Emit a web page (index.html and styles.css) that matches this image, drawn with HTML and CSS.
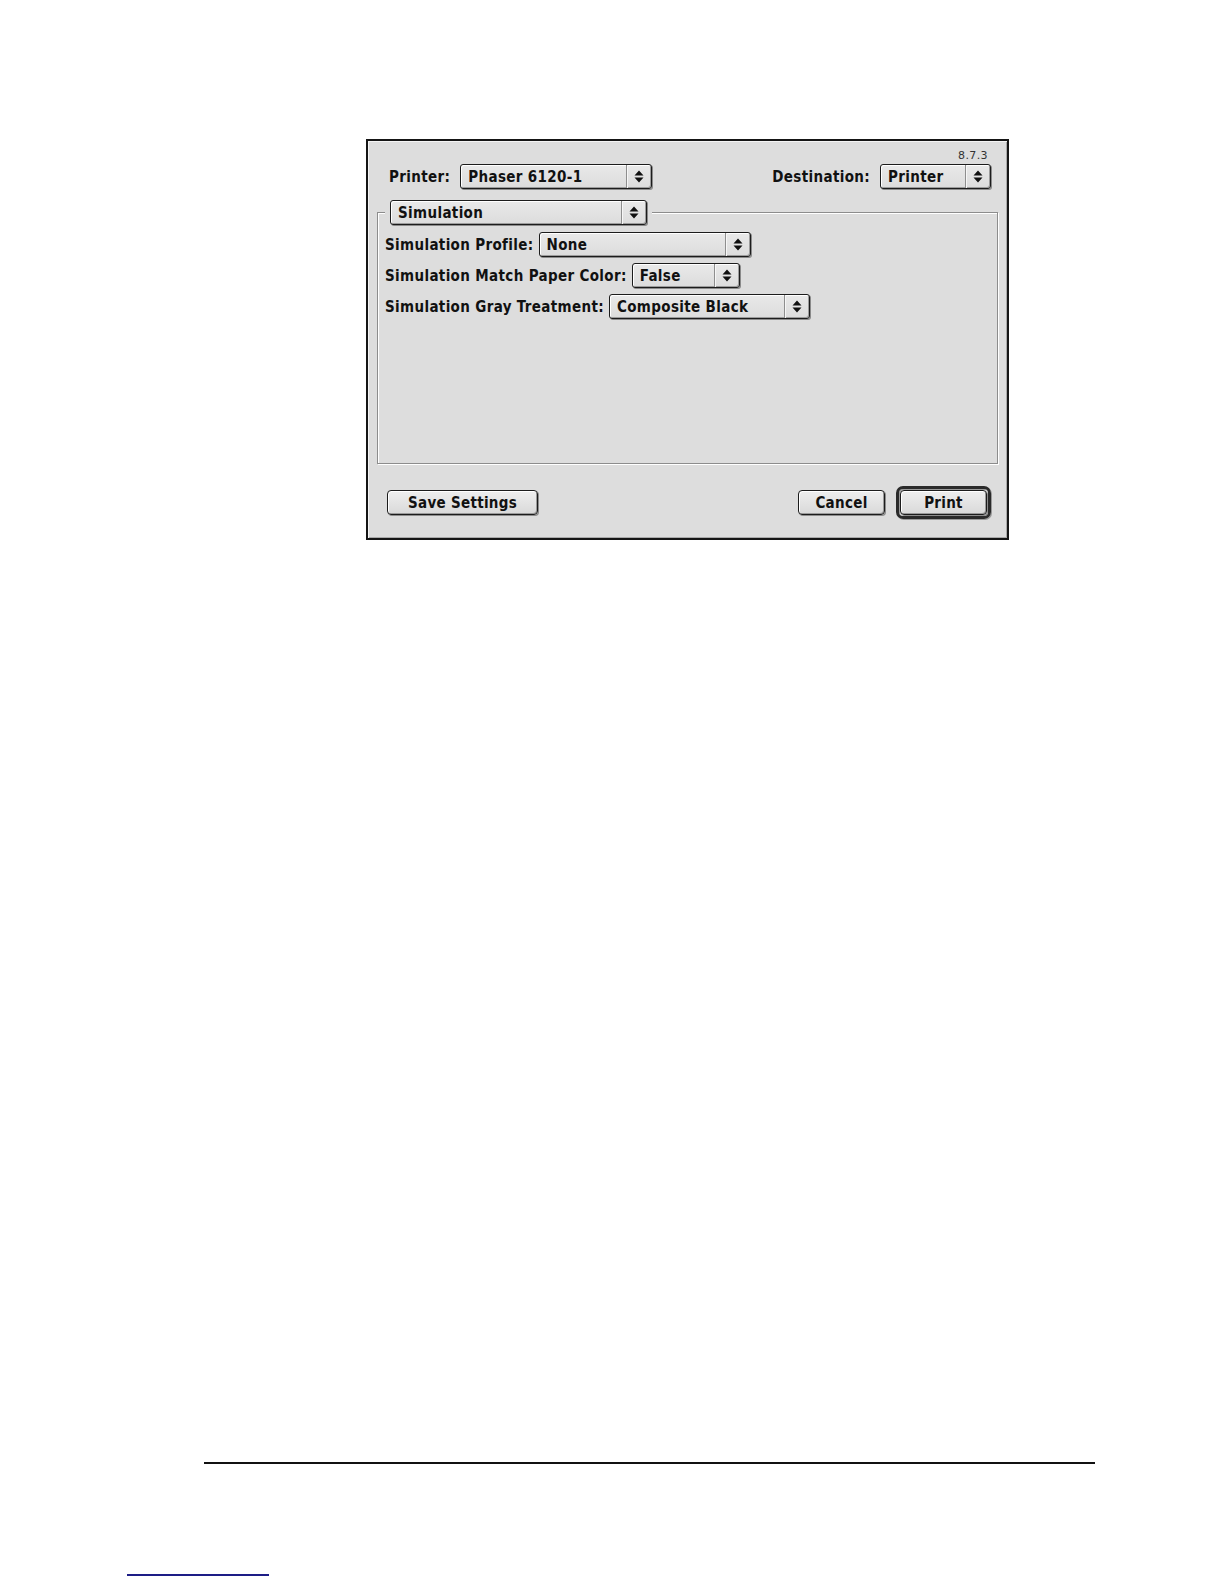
FILE: index.html
```html
<!DOCTYPE html>
<html lang="en">
<head>
<meta charset="utf-8">
<title>Print – Simulation</title>
<link rel="stylesheet" href="styles.css">
</head>
<body>
<div class="page">
  <div class="dialog">
    <div class="version">8.7.3</div>
    <div class="toprow">
      <div class="field">
        <span class="label">Printer:</span>
        <div class="popup w-printer">
          <span class="val">Phaser 6120-1</span>
          <span class="arrows"><svg width="10" height="13" viewBox="0 0 10 13"><path d="M5 0.5 L9.5 5.5 L0.5 5.5 Z M0.5 7.5 L9.5 7.5 L5 12.5 Z" fill="#111"/></svg></span>
        </div>
      </div>
      <div class="field">
        <span class="label">Destination:</span>
        <div class="popup w-dest">
          <span class="val">Printer</span>
          <span class="arrows"><svg width="10" height="13" viewBox="0 0 10 13"><path d="M5 0.5 L9.5 5.5 L0.5 5.5 Z M0.5 7.5 L9.5 7.5 L5 12.5 Z" fill="#111"/></svg></span>
        </div>
      </div>
    </div>

    <div class="group">
      <div class="group-title">
        <div class="popup w-sim">
          <span class="val">Simulation</span>
          <span class="arrows"><svg width="10" height="13" viewBox="0 0 10 13"><path d="M5 0.5 L9.5 5.5 L0.5 5.5 Z M0.5 7.5 L9.5 7.5 L5 12.5 Z" fill="#111"/></svg></span>
        </div>
      </div>
      <div class="rows">
        <div class="row">
          <span class="label">Simulation Profile:</span>
          <div class="popup w-profile">
            <span class="val">None</span>
            <span class="arrows"><svg width="10" height="13" viewBox="0 0 10 13"><path d="M5 0.5 L9.5 5.5 L0.5 5.5 Z M0.5 7.5 L9.5 7.5 L5 12.5 Z" fill="#111"/></svg></span>
          </div>
        </div>
        <div class="row">
          <span class="label">Simulation Match Paper Color:</span>
          <div class="popup w-match">
            <span class="val">False</span>
            <span class="arrows"><svg width="10" height="13" viewBox="0 0 10 13"><path d="M5 0.5 L9.5 5.5 L0.5 5.5 Z M0.5 7.5 L9.5 7.5 L5 12.5 Z" fill="#111"/></svg></span>
          </div>
        </div>
        <div class="row">
          <span class="label">Simulation Gray Treatment:</span>
          <div class="popup w-gray">
            <span class="val">Composite Black</span>
            <span class="arrows"><svg width="10" height="13" viewBox="0 0 10 13"><path d="M5 0.5 L9.5 5.5 L0.5 5.5 Z M0.5 7.5 L9.5 7.5 L5 12.5 Z" fill="#111"/></svg></span>
          </div>
        </div>
      </div>
    </div>

    <div class="buttons">
      <button class="btn w-save" type="button">Save Settings</button>
      <div class="btn-right">
        <button class="btn w-cancel" type="button">Cancel</button>
        <span class="default-ring"><button class="btn w-print" type="button">Print</button></span>
      </div>
    </div>
  </div>

  <div class="rule"></div>
  <div class="link-line"></div>
</div>
</body>
</html>
```

FILE: styles.css
```css
html, body {
  margin: 0;
  padding: 0;
  background: #ffffff;
}

.page {
  padding-top: 139px;
  font-family: "DejaVu Sans Condensed", "DejaVu Sans", "Liberation Sans", sans-serif;
  font-stretch: condensed;
  color: #111;
}

.dialog {
  box-sizing: border-box;
  width: 643px;
  height: 401px;
  margin-left: 366px;
  background: #dddddd;
  border: 2px solid #151515;
  box-shadow: inset 1px 1px 0 #f4f4f4, inset -1px -1px 0 #a9a9a9;
}

.version {
  box-sizing: border-box;
  height: 23px;
  padding: 9px 19px 0 0;
  text-align: right;
  font-family: "DejaVu Sans", sans-serif;
  font-stretch: normal;
  font-size: 11px;
  line-height: 12px;
  color: #333;
  letter-spacing: 0.4px;
}

.toprow {
  display: flex;
  justify-content: space-between;
  align-items: center;
  height: 25px;
  padding: 0 16px 0 21px;
}

.field {
  display: flex;
  align-items: center;
  gap: 10px;
}

.label {
  font-weight: bold;
  font-size: 15px;
  letter-spacing: 0.35px;
  white-space: nowrap;
}

/* Popup menu */
.popup {
  box-sizing: border-box;
  display: flex;
  align-items: stretch;
  height: 25px;
  border: 1px solid #1c1c1c;
  border-radius: 3px;
  background: linear-gradient(#e9e9e9, #dcdcdc);
  box-shadow: inset 1px 1px 0 #ffffff, inset -1px -1px 0 #9c9c9c, 1px 1px 0 #8a8a8a;
}

.popup .val {
  flex: 1;
  padding-left: 7px;
  font-weight: bold;
  font-size: 15px;
  letter-spacing: 0.35px;
  line-height: 24px;
  white-space: nowrap;
}

.popup .arrows {
  display: flex;
  align-items: center;
  justify-content: center;
  width: 24px;
  border-left: 1px solid #8e8e8e;
  box-shadow: inset 1px 0 0 #f6f6f6;
}

.w-printer { width: 192px; }
.w-dest { width: 111px; }
.w-sim { width: 257px; }
.w-profile { width: 212px; }
.w-match { width: 108px; }
.w-gray { width: 201px; }

/* Group box */
.group {
  box-sizing: border-box;
  width: 621px;
  height: 252px;
  margin: 23px 0 0 9px;
  padding: 0 7px;
  border: 1px solid #8c8c8c;
  box-shadow: inset 1px 1px 0 #ffffff, 1px 1px 0 #ffffff;
}

.group-title {
  display: flex;
  width: max-content;
  margin: -13px 0 0 0;
  padding: 0 5px;
  background: #dddddd;
}

.rows {
  display: flex;
  flex-direction: column;
  gap: 6px;
  padding-top: 7px;
}

.row {
  display: flex;
  align-items: center;
  gap: 5px;
}

/* Buttons */
.buttons {
  display: flex;
  justify-content: space-between;
  align-items: center;
  height: 33px;
  margin-top: 22px;
  padding: 0 16px 0 19px;
}

.btn-right {
  display: flex;
  align-items: center;
  gap: 11px;
}

.btn {
  box-sizing: border-box;
  height: 25px;
  margin: 0;
  padding: 0;
  border: 1px solid #1c1c1c;
  border-radius: 4px;
  background: linear-gradient(#eeeeee, #d9d9d9);
  box-shadow: inset 1px 1px 0 #ffffff, inset -1px -1px 0 #9a9a9a, 1px 1px 0 #8c8c8c;
  font-family: inherit;
  font-stretch: condensed;
  font-weight: bold;
  font-size: 15px;
  letter-spacing: 0.3px;
  color: #111;
  text-align: center;
}

.w-save { width: 151px; }
.w-cancel { width: 87px; }
.w-print { width: 87px; }

.default-ring {
  display: flex;
  padding: 1px;
  border: 3px solid #2a2a2a;
  border-radius: 7px;
  box-shadow: inset 1px 1px 0 #9a9a9a, 1px 1px 0 #999;
}

/* Page footer marks */
.rule {
  width: 891px;
  height: 2px;
  margin: 922px 0 0 204px;
  background: #111;
}

.link-line {
  width: 142px;
  height: 2px;
  margin: 110px 0 0 127px;
  background: #1d1d86;
}
```
